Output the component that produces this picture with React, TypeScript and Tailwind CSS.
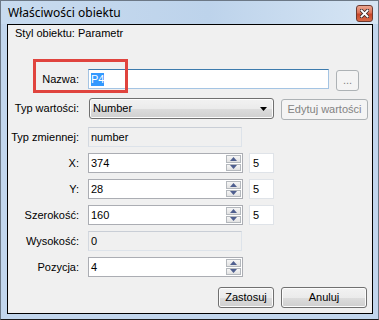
import * as React from 'react';

function Label({ children }: { children: React.ReactNode }) {
  return <div className="w-[72px] shrink-0 text-right pr-[1px]">{children}</div>;
}

function Spinner() {
  return (
    <div className="absolute right-[1px] top-[1px] bottom-[1px] w-[15px] flex flex-col gap-[1px]">
      {[0, 1].map((i) => (
        <div
          key={i}
          className="flex-1 flex items-center justify-center border border-[#b4b8bd] bg-[linear-gradient(#f6f6f6,#e2e2e2)]"
        >
          <svg width="7" height="4" viewBox="0 0 7 4">
            {i === 0 ? (
              <path d="M0 4 L3.5 0 L7 4 Z" fill="#4f5f8f" />
            ) : (
              <path d="M0 0 L3.5 4 L7 0 Z" fill="#4f5f8f" />
            )}
          </svg>
        </div>
      ))}
    </div>
  );
}

function NumberRow({ label, value, step }: { label: string; value: string; step?: string }) {
  return (
    <div className="flex items-center h-[20px] mt-[6px]">
      <Label>{label}</Label>
      <div className="relative ml-[8px] w-[155px] h-[20px] bg-white border border-[#abadb3] pl-[2px] leading-[18px]">
        {value}
        <Spinner />
      </div>
      {step && (
        <div className="ml-[6px] w-[25px] h-[20px] bg-white border border-[#dfe3e8] pl-[3px] leading-[18px]">
          {step}
        </div>
      )}
    </div>
  );
}

function ReadonlyRow({ label, value, mt }: { label: string; value: string; mt: string }) {
  return (
    <div className={`flex items-center h-[20px] ${mt}`}>
      <Label>{label}</Label>
      <div className="ml-[8px] w-[154px] h-[20px] bg-[#f0f0f0] border border-[#dde3ea] border-t-[#c9ced6] border-l-[#d3d8df] pl-[2px] leading-[18px]">
        {value}
      </div>
    </div>
  );
}

const face =
  'h-[21px] rounded-[3px] border border-[#707070] bg-[linear-gradient(#f2f2f2_0%,#ebebeb_50%,#dddddd_50%,#cfcfcf_100%)] shadow-[inset_0_0_0_1px_#fcfcfc] flex items-center text-black';
const btn = `${face} justify-center`;
const btnDisabled =
  'h-[21px] rounded-[3px] border border-[#adb2b5] bg-[#f4f4f4] flex items-center justify-center text-[#838383]';

export default function App() {
  return (
    <div className="w-[379px] h-[320px] flex flex-col bg-[#c2d6ed] border border-[#6c7886] border-b-[#1c1c1c] font-['Liberation_Sans',Arial,sans-serif] text-[11px] text-black leading-[13px]">
      <div className="h-[23px] flex items-start justify-between bg-[linear-gradient(90deg,#c8dbef_0%,#bdd3eb_55%,#d6e5f4_100%)]">
        <div className="pl-[7px] pt-[4px] text-[12px] leading-[15px] font-['Noto_Sans',sans-serif]">
          Właściwości obiektu
        </div>
        <div className="mt-[4px] mr-[5px] w-[17px] h-[17px] rounded-[3px] border border-[#6d3a30] bg-[linear-gradient(#eba58f_0%,#dc7258_45%,#c7452a_55%,#d86a48_100%)] flex items-center justify-center">
          <svg width="9" height="9" viewBox="0 0 9 9">
            <path d="M1.5 1.5 L7.5 7.5 M7.5 1.5 L1.5 7.5" stroke="#3a2a2a" strokeWidth="3.4" strokeLinecap="square" />
            <path d="M1.5 1.5 L7.5 7.5 M7.5 1.5 L1.5 7.5" stroke="#ffffff" strokeWidth="1.8" strokeLinecap="square" />
          </svg>
        </div>
      </div>

      <div className="relative flex-1 ml-[6px] mr-[5px] mb-[5px] border border-black bg-[#f0f0f0] flex flex-col">
        <div className="ml-[7px] mt-[2px] h-[13px]">Styl obiektu: Parametr</div>

        <div className="flex items-start h-[21px] mt-[29px]">
          <div className="h-[20px] flex items-center">
            <Label>Nazwa:</Label>
          </div>
          <div className="ml-[8px] w-[241px] h-[20px] bg-white border border-[#a4c4e3] border-t-[#3d7bad] pl-[2px] flex items-center">
            <span className="bg-[#3399ff] text-white">P4</span>
          </div>
          <div className={`${btnDisabled} ml-[7px] mt-[1px] w-[23px]`}>...</div>
        </div>

        <div className="flex items-start h-[21px] mt-[8px]">
          <div className="h-[21px] flex items-center">
            <Label>Typ wartości:</Label>
          </div>
          <div className={`${face} justify-between ml-[9px] w-[185px] pl-[3px] pr-[6px]`}>
            <span>Number</span>
            <svg width="7" height="4" viewBox="0 0 7 4">
              <path d="M0 0 L7 0 L3.5 4 Z" fill="#000" />
            </svg>
          </div>
          <div className={`${btnDisabled} ml-[7px] mt-[1px] w-[87px]`}>Edytuj wartości</div>
        </div>

        <ReadonlyRow label="Typ zmiennej:" value="number" mt="mt-[8px]" />
        <NumberRow label="X:" value="374" step="5" />
        <NumberRow label="Y:" value="28" step="5" />
        <NumberRow label="Szerokość:" value="160" step="5" />
        <ReadonlyRow label="Wysokość:" value="0" mt="mt-[6px]" />
        <NumberRow label="Pozycja:" value="4" />

        <div className="flex mt-[10px] ml-[210px]">
          <div className={`${btn} w-[56px]`}>Zastosuj</div>
          <div className={`${btn} ml-[7px] w-[86px]`}>Anuluj</div>
        </div>

        <div className="absolute left-[25px] top-[34px] w-[95px] h-[34px] border-[3px] border-[#e0443e]" />
      </div>
    </div>
  );
}
